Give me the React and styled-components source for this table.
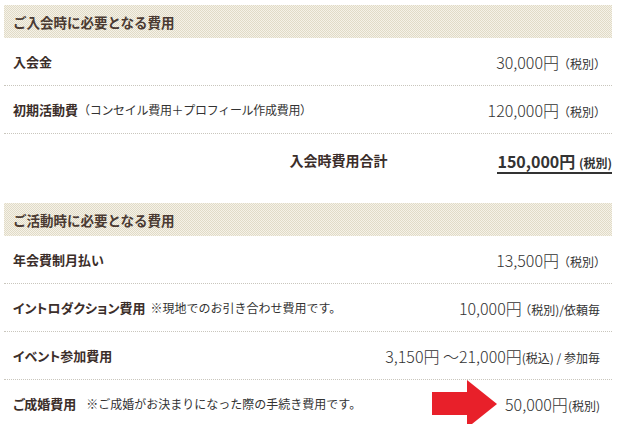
import React from "react";
import styled, { createGlobalStyle } from "styled-components";

const GlobalStyle = createGlobalStyle`
  html, body {
    margin: 0;
    padding: 0;
    background: #ffffff;
    overflow: hidden;
  }
  body {
    font-family: "Noto Sans CJK JP", "Noto Sans", sans-serif;
    color: #333333;
  }
`;

const Page = styled.div`
  width: 608px;
  padding: 5px 5px 0 4px;
`;

const Section = styled.section`
  display: flex;
  flex-direction: column;
  margin-bottom: ${(props) => props.gap || 0}px;
`;

const Head = styled.h2`
  margin: 0;
  height: 33px;
  display: flex;
  align-items: center;
  padding-left: 9px;
  font-size: 13.5px;
  font-weight: bold;
  color: #4a3a32;
  background: conic-gradient(
      #e1dbc7 25%,
      #f5f2e8 0 50%,
      #e1dbc7 0 75%,
      #f5f2e8 0
    )
    0 0 / 2px 2px;
`;

const Row = styled.div`
  height: 47px;
  display: flex;
  align-items: center;
  justify-content: space-between;
  padding: 0 12px 0 9px;
  border-bottom: 1px dotted #c9c6bd;
  &:last-child {
    border-bottom: none;
  }
`;

const Label = styled.div`
  display: flex;
  align-items: baseline;
  gap: ${(props) => props.gap || 0}px;
`;

const Name = styled.span`
  font-size: 13px;
  font-weight: bold;
  color: #3b2e2a;
  font-feature-settings: "palt";
`;

const Note = styled.span`
  font-size: 12px;
  color: #333333;
  letter-spacing: ${(props) => (props.tight ? "-0.3px" : "0")};
`;

const Price = styled.div`
  position: relative;
  display: flex;
  align-items: baseline;
  font-size: 16px;
  font-weight: 300;
  color: #333333;
  white-space: pre;
`;

const Small = styled.span`
  font-size: 12px;
  font-weight: ${(props) => (props.bold ? "bold" : "400")};
  margin-left: ${(props) => props.space || 0}px;
  font-feature-settings: ${(props) => (props.half ? '"halt"' : "normal")};
`;

const TotalRow = styled.div`
  height: 51px;
  display: flex;
  align-items: center;
  justify-content: flex-end;
  gap: 110px;
`;

const TotalName = styled.span`
  font-size: 14px;
  font-weight: bold;
  color: #3b2e2a;
`;

const TotalPrice = styled.span`
  font-size: 16px;
  font-weight: bold;
  color: #333333;
  border-bottom: 2px solid #333333;
  line-height: 19px;
  margin-top: 6px;
  white-space: pre;
`;

const Arrow = styled.svg`
  position: absolute;
  right: calc(100% + 7px);
  top: -12px;
`;

const App = () => {
  return (
    <Page>
      <GlobalStyle />
      <Section gap={18}>
        <Head>ご入会時に必要となる費用</Head>
        <Row>
          <Label>
            <Name>入会金</Name>
          </Label>
          <Price>
            30,000円<Small space={5} half>（税別）</Small>
          </Price>
        </Row>
        <Row>
          <Label>
            <Name>初期活動費</Name>
            <Note tight>（コンセイル費用＋プロフィール作成費用）</Note>
          </Label>
          <Price>
            120,000円<Small space={5} half>（税別）</Small>
          </Price>
        </Row>
        <TotalRow>
          <TotalName>入会時費用合計</TotalName>
          <TotalPrice>
            150,000円 <Small bold>(税別)</Small>
          </TotalPrice>
        </TotalRow>
      </Section>

      <Section>
        <Head>ご活動時に必要となる費用</Head>
        <Row>
          <Label>
            <Name>年会費制月払い</Name>
          </Label>
          <Price>
            13,500円<Small space={5} half>（税別）</Small>
          </Price>
        </Row>
        <Row>
          <Label gap={5}>
            <Name>イントロダクション費用</Name>
            <Note>※現地でのお引き合わせ費用です。</Note>
          </Label>
          <Price>
            10,000円 <Small half>（税別)/依頼毎</Small>
          </Price>
        </Row>
        <Row>
          <Label>
            <Name>イベント参加費用</Name>
          </Label>
          <Price>
            3,150円 〜21,000円<Small>(税込) / 参加毎</Small>
          </Price>
        </Row>
        <Row>
          <Label gap={10}>
            <Name>ご成婚費用</Name>
            <Note>※ご成婚がお決まりになった際の手続き費用です。</Note>
          </Label>
          <Price>
            <Arrow width="66" height="48" viewBox="0 0 66 48">
              <polygon
                points="0,12 35,12 35,0 65,24 35,48 35,35 0,35"
                fill="#e8202a"
              />
            </Arrow>
            50,000円<Small>(税別)</Small>
          </Price>
        </Row>
      </Section>
    </Page>
  );
};

export default App;
